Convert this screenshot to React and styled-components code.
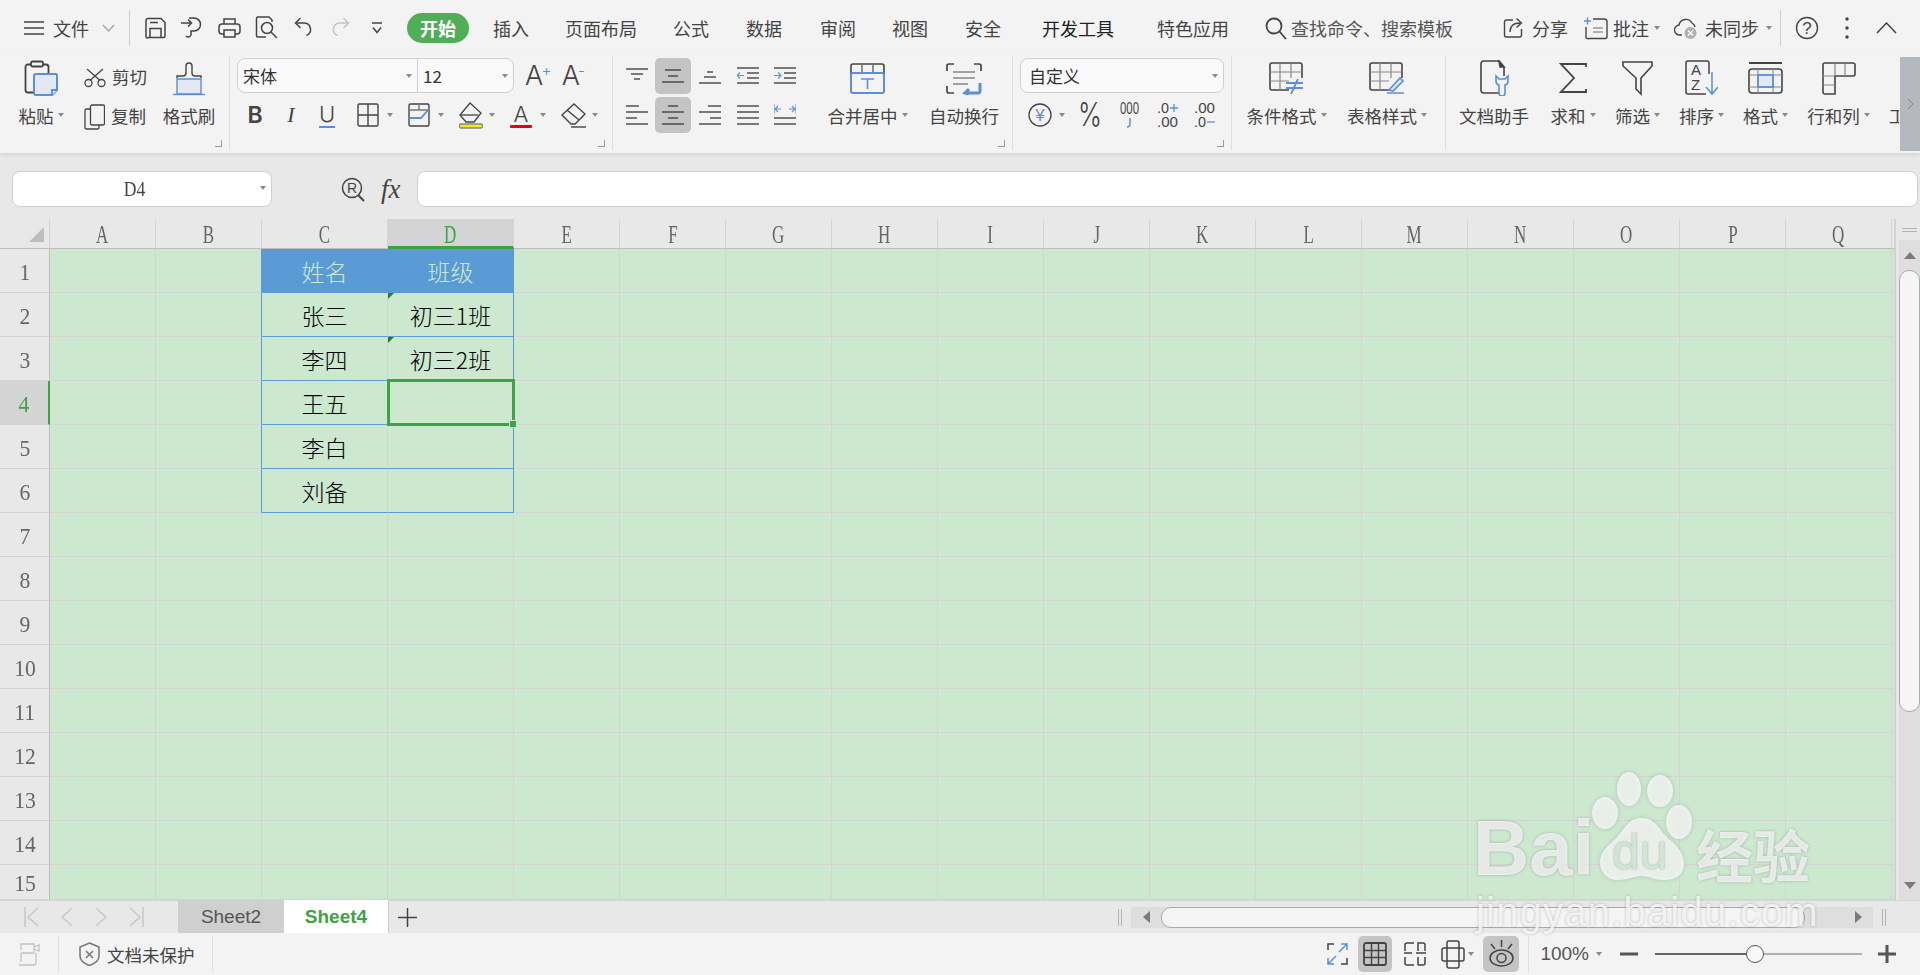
import React from 'react';
import styled, { createGlobalStyle } from 'styled-components';

const BLUE = '#5b8fd9';
const GRID = '#d3d5d3';
const CELL_BG = '#cce8cf';
const TABLE_BLUE = '#5b9bd5';
const GREEN = '#3fa243';

const GlobalStyle = createGlobalStyle`
  html, body { margin: 0; padding: 0; background: #e8e8e8; }
  body { font-family: "Noto Sans CJK SC", "Noto Sans", sans-serif; color: #444; }
  * { box-sizing: border-box; }
`;

const Shell = styled.div`
  position: relative;
  width: 1920px;
  height: 975px;
  overflow: hidden;
  display: flex;
  flex-direction: column;
`;

const Svg = styled.svg.attrs(p => ({ viewBox: `0 0 ${p.$w} ${p.$h}`, width: p.$w, height: p.$h }))`
  display: block;
  flex: none;
  fill: none;
  stroke: ${p => p.$stroke || '#444'};
  stroke-width: ${p => p.$sw || 1.5};
  margin-left: ${p => p.$ml || 0}px;
`;

/* title row */
const TitleBar = styled.div`
  height: 50px;
  flex: none;
  display: flex;
  align-items: center;
  padding: 5px 0 0 24px;
  background: #f3f3f3;
  font-size: 18px;
  white-space: nowrap;
`;
const FileLabel = styled.span`
  margin-left: 9px;
`;
const TitleDivider = styled.span`
  width: 1px;
  height: 36px;
  background: #cfcfcf;
  margin: 0 ${p => p.$right ?? 14}px 0 ${p => p.$left ?? 14}px;
  flex: none;
`;
const QuickTools = styled.div`
  display: flex;
  gap: 15px;
  align-items: center;
`;
const QuickSlot = styled.span`
  width: 22px;
  display: flex;
  justify-content: center;
`;
const HomePill = styled.span`
  width: 62px;
  height: 30px;
  border-radius: 15px;
  background: #52ad58;
  color: #fff;
  font-weight: 700;
  display: flex;
  align-items: center;
  justify-content: center;
  margin: 0 6px 0 19px;
`;
const MenuTab = styled.span`
  padding: 0 18px;
  margin-left: ${p => p.$ml || 0}px;
  color: ${p => (p.$dark ? '#222' : '#444')};
`;
const SearchText = styled.span`
  margin-left: 4px;
  color: #555;
`;
const TitleAction = styled.span`
  display: flex;
  align-items: center;
  gap: ${p => p.$gap ?? 6}px;
  margin-left: ${p => p.$ml || 0}px;
`;
const Caret = styled.i`
  display: block;
  flex: none;
  width: 0;
  height: 0;
  border-left: 3.5px solid transparent;
  border-right: 3.5px solid transparent;
  border-top: 4px solid #8a8a8a;
  margin-left: ${p => p.$ml || 0}px;
`;

/* ribbon */
const Ribbon = styled.div`
  height: 103px;
  flex: none;
  display: flex;
  padding-top: 6px;
  background: #f3f3f3;
  box-shadow: 0 2px 4px rgba(0, 0, 0, 0.08);
  position: relative;
  z-index: 2;
  font-size: 17.5px;
`;
const Group = styled.section`
  position: relative;
  flex: none;
  width: ${p => p.$w}px;
  height: 94px;
  padding: 2px 0 0 ${p => p.$pl || 0}px;
  border-right: 1px solid ${p => (p.$last ? 'transparent' : '#e0e0e0')};
  display: flex;
  gap: ${p => p.$gap || 0}px;
  overflow: hidden;
`;
const Launcher = styled.span`
  position: absolute;
  right: 7px;
  bottom: 3px;
  width: 7px;
  height: 7px;
  border-right: 1.5px solid #999;
  border-bottom: 1.5px solid #999;
`;
const LargeTool = styled.div`
  flex: none;
  width: ${p => p.$w}px;
  margin-left: ${p => p.$ml || 0}px;
  display: flex;
  flex-direction: column;
  align-items: center;
`;
const IconSlot = styled.div`
  height: 40px;
  display: flex;
  align-items: center;
  justify-content: center;
`;
const ToolLabel = styled.div`
  height: 34px;
  display: flex;
  align-items: center;
  gap: 4px;
  white-space: nowrap;
  color: #444;
`;
const SmallStack = styled.div`
  flex: none;
  margin-left: ${p => p.$ml || 0}px;
  width: ${p => p.$w}px;
`;
const SmallTool = styled.div`
  height: 39px;
  display: flex;
  align-items: center;
  gap: 6px;
  span {
    margin-top: -3px;
  }
`;
const Stack = styled.div`
  display: flex;
  flex-direction: column;
  gap: 4px;
  flex: none;
`;
const ToolRow = styled.div`
  display: flex;
  align-items: center;
  height: ${p => p.$h || 36}px;
  gap: ${p => p.$gap || 0}px;
  padding-left: ${p => p.$pl || 0}px;
`;
const Combo = styled.div`
  flex: none;
  width: ${p => p.$w}px;
  height: 35px;
  border: 1.5px solid #d0d0d0;
  border-radius: 8px;
  background: #f9f9f9;
  display: flex;
  overflow: hidden;
`;
const ComboField = styled.div`
  width: ${p => (p.$w ? `${p.$w}px` : 'auto')};
  flex: ${p => (p.$w ? 'none' : 1)};
  display: flex;
  align-items: center;
  justify-content: space-between;
  padding: 0 5px 0 ${p => p.$pl || 5}px;
  border-right: ${p => (p.$sep ? '1px solid #d0d0d0' : 'none')};
  color: #333;
  font-size: 17px;
`;
const SizeGlyph = styled.span`
  font-family: Inter, "Liberation Sans", sans-serif;
  font-weight: 300;
  font-size: 27px;
  line-height: 35px;
  color: #444;
  margin-left: ${p => p.$ml}px;
  display: flex;
  sup {
    font-size: 16px;
    line-height: 24px;
    margin-left: -2px;
    color: ${BLUE};
  }
`;
const StyleLetter = styled.span`
  width: 36px;
  text-align: center;
  font-family: ${p => (p.$italic ? '"Liberation Serif", serif' : 'Inter, "Liberation Sans", sans-serif')};
  font-size: ${p => (p.$bold ? 23 : 22)}px;
  font-weight: ${p => (p.$bold ? 600 : 300)};
  font-style: ${p => (p.$italic ? 'italic' : 'normal')};
  color: #444;
  line-height: 22px;
  span {
    display: block;
    height: 2px;
    width: 16px;
    margin: 1px auto 0;
    background: ${BLUE};
  }
`;
const FormatTools = styled.div`
  display: flex;
  gap: 15px;
  margin-left: 12px;
`;
const CaretTool = styled.div`
  display: flex;
  align-items: center;
  width: ${p => p.$w || 36}px;
`;
const FontColorGlyph = styled.div`
  width: 22px;
  text-align: center;
  font-family: Inter, "Liberation Sans", sans-serif;
  font-weight: 300;
  font-size: 22px;
  line-height: 22px;
  span {
    display: block;
    height: 3px;
    background: #e60012;
    border-radius: 1px;
  }
`;
const AlignGrid = styled.div`
  display: grid;
  grid-template-columns: 37px 36px 38px 38px 36px;
  grid-template-rows: 36px 36px;
  row-gap: 3px;
  flex: none;
`;
const AlignCell = styled.div`
  display: flex;
  align-items: center;
  justify-content: center;
  border-radius: 5px;
  background: ${p => (p.$on ? '#c4c4c4' : 'transparent')};
`;
const ScrollButton = styled.div`
  flex: none;
  width: 20px;
  height: 94px;
  margin-top: 1px;
  background: #b5b8bf;
  display: flex;
  align-items: center;
  justify-content: center;
`;

/* formula bar */
const FormulaBar = styled.div`
  height: 66px;
  flex: none;
  display: flex;
  align-items: flex-start;
  padding: 18px 2px 0 12px;
  background: #e8e8e8;
`;
const NameBox = styled.div`
  position: relative;
  width: 260px;
  height: 36px;
  flex: none;
  background: #fff;
  border: 1.5px solid #d0d0d0;
  border-radius: 8px;
  display: flex;
  align-items: center;
  justify-content: center;
  padding-right: 16px;
  font-family: "Liberation Serif", serif;
  font-size: 22px;
  color: #444;
  span {
    display: block;
    transform: scaleX(0.8);
  }
  i {
    position: absolute;
    right: 5px;
    top: 14px;
  }
`;
const FormulaIcon = styled.div`
  height: 36px;
  display: flex;
  align-items: center;
  margin-left: ${p => p.$ml}px;
`;
const FxGlyph = styled.span`
  font-family: "Liberation Serif", serif;
  font-style: italic;
  font-size: 27px;
  color: #444;
  width: 24px;
`;
const FormulaInput = styled.div`
  flex: 1;
  height: 36px;
  margin-left: 12px;
  background: #fff;
  border: 1.5px solid #d0d0d0;
  border-radius: 8px;
`;

/* sheet */
const SheetArea = styled.div`
  height: 681px;
  flex: none;
  display: flex;
  background: #e8e8e8;
`;
const SheetGrid = styled.div`
  flex: none;
  display: grid;
  grid-template-columns: 50px 106px 106px 126px 126px repeat(13, 106px) 3px;
  grid-template-rows: 30px repeat(14, 44px) 35px;
`;
const Corner = styled.div`
  background: #e8e8e8;
  border-right: 1px solid #d4d4d4;
  border-bottom: 1px solid #bdbdbd;
  display: flex;
  justify-content: flex-end;
  align-items: center;
  padding: 2px 5px 0 0;
  i {
    width: 0;
    height: 0;
    border-left: 15px solid transparent;
    border-bottom: 15px solid #bdbdbd;
  }
`;
const ColHead = styled.div`
  background: ${p => (p.$active ? '#d4d4d4' : '#e8e8e8')};
  border-right: 1px solid #d4d4d4;
  border-bottom: ${p => (p.$active ? `3px solid ${GREEN}` : '1px solid #bdbdbd')};
  color: ${p => (p.$active ? GREEN : '#666')};
  display: flex;
  align-items: center;
  justify-content: center;
  font-family: "Liberation Serif", serif;
  font-size: 25px;
  span {
    display: block;
    transform: scaleX(0.68);
    padding-top: ${p => (p.$active ? 4 : 2)}px;
  }
`;
const RowHead = styled.div`
  background: ${p => (p.$active ? '#d4d4d4' : '#e8e8e8')};
  border-right: ${p => (p.$active ? `2px solid ${GREEN}` : '1px solid #bdbdbd')};
  border-bottom: 1px solid #d4d4d4;
  color: ${p => (p.$active ? GREEN : '#666')};
  display: flex;
  align-items: center;
  justify-content: center;
  font-family: "Liberation Serif", serif;
  font-size: 24px;
  span {
    display: block;
    transform: scaleX(0.9);
    padding-top: 3px;
  }
`;
const Cell = styled.div`
  position: relative;
  background: ${p => (p.$head ? TABLE_BLUE : CELL_BG)};
  border-right: 1px solid ${p => (p.$head ? TABLE_BLUE : p.$edge ? TABLE_BLUE : GRID)};
  border-bottom: 1px solid ${p => (p.$head ? TABLE_BLUE : p.$under ? TABLE_BLUE : GRID)};
  color: ${p => (p.$head ? CELL_BG : '#000')};
  font-size: 23px;
  font-weight: 300;
  display: flex;
  align-items: center;
  justify-content: center;
  white-space: nowrap;
  &::before {
    content: '';
    display: ${p => (p.$flag ? 'block' : 'none')};
    position: absolute;
    left: 0;
    top: 0;
    border-top: 6px solid #138a1d;
    border-right: 6px solid transparent;
  }
`;
const Selection = styled.div`
  position: absolute;
  top: -2px;
  left: -1px;
  right: -2px;
  bottom: -2px;
  border: 3px solid ${GREEN};
  z-index: 1;
  i {
    position: absolute;
    right: -4px;
    bottom: -4px;
    width: 6px;
    height: 6px;
    background: ${GREEN};
    outline: 1px solid ${CELL_BG};
  }
`;
const VScroll = styled.div`
  flex: none;
  width: 25px;
  border-left: 1px solid #d0d0d0;
  padding-left: 3px;
  display: flex;
  flex-direction: column;
`;
const VSplit = styled.div`
  height: 21px;
  flex: none;
  display: flex;
  flex-direction: column;
  justify-content: center;
  gap: 2px;
  padding: 0 3px;
  i {
    display: block;
    height: 1px;
    background: #b4b4b4;
  }
`;
const VTrack = styled.div`
  flex: 1;
  background: #dedede;
  display: flex;
  flex-direction: column;
`;
const ArrowSlot = styled.div`
  height: 30px;
  flex: none;
  display: flex;
  align-items: center;
  justify-content: center;
  margin-top: ${p => (p.$end ? 'auto' : 0)};
`;
const VThumb = styled.div`
  height: 442px;
  flex: none;
  background: #f5f5f5;
  border: 1px solid #aaa;
  border-radius: 10px;
`;
const TriUp = styled.i`
  width: 0;
  height: 0;
  border-left: 6px solid transparent;
  border-right: 6px solid transparent;
  border-bottom: 7px solid #7a7a7a;
`;
const TriDown = styled(TriUp)`
  border-bottom: 0;
  border-top: 7px solid #7a7a7a;
`;
const TriLeft = styled.i`
  width: 0;
  height: 0;
  border-top: 6px solid transparent;
  border-bottom: 6px solid transparent;
  border-right: 7px solid #7a7a7a;
`;
const TriRight = styled.i`
  width: 0;
  height: 0;
  border-top: 6px solid transparent;
  border-bottom: 6px solid transparent;
  border-left: 7px solid #7a7a7a;
`;

/* tab bar */
const TabBar = styled.div`
  height: 33px;
  flex: none;
  display: flex;
  align-items: center;
  background: #e8e8e8;
  border-top: 1px solid #d6d6d6;
  padding-right: 34px;
`;
const TabNav = styled.div`
  width: 178px;
  flex: none;
  display: flex;
  align-items: center;
  gap: 22px;
  padding-left: 24px;
`;
const SheetTab = styled.div`
  width: ${p => p.$w}px;
  height: 33px;
  margin-top: -1px;
  flex: none;
  display: flex;
  align-items: center;
  justify-content: center;
  font-family: "Liberation Sans", sans-serif;
  font-size: 19px;
  font-weight: ${p => (p.$active ? 700 : 400)};
  color: ${p => (p.$active ? GREEN : '#555')};
  background: ${p => (p.$active ? '#fff' : '#cfcfcf')};
  border-right: ${p => (p.$active ? '1px solid #ccc' : 'none')};
`;
const HSplit = styled.i`
  flex: none;
  display: block;
  width: 4px;
  height: 17px;
  border-left: 1px solid #b4b4b4;
  border-right: 1px solid #b4b4b4;
  margin-left: ${p => p.$ml || 0};
`;
const HTrack = styled.div`
  width: 742px;
  height: 21px;
  flex: none;
  margin: 0 9px;
  background: #dedede;
  display: flex;
  align-items: center;
`;
const HArrow = styled.div`
  width: 30px;
  flex: none;
  display: flex;
  justify-content: center;
  margin-left: ${p => p.$ml || 0}px;
`;
const HThumb = styled.div`
  width: 644px;
  height: 21px;
  flex: none;
  background: #f5f5f5;
  border: 1px solid #aaa;
  border-radius: 10px;
`;

/* status bar */
const StatusBar = styled.div`
  flex: 1;
  display: flex;
  align-items: center;
  padding: 0 24px 0 17px;
  background: #f3f3f3;
  font-size: 17.5px;
`;
const StatusDivider = styled.span`
  flex: none;
  width: 1px;
  height: 36px;
  background: #e0e0e0;
  margin-left: ${p => p.$ml}px;
`;
const StatusText = styled.span`
  margin-left: ${p => p.$ml || 0}px;
  color: ${p => p.$color || '#444'};
`;
const StatusItem = styled.div`
  flex: none;
  display: flex;
  align-items: center;
  justify-content: center;
  margin-left: ${p => (p.$auto ? 'auto' : `${p.$ml || 0}px`)};
  width: ${p => (p.$w ? `${p.$w}px` : 'auto')};
  height: ${p => (p.$on ? '36px' : 'auto')};
  border-radius: 5px;
  background: ${p => (p.$on ? '#c4c4c4' : 'transparent')};
`;
const ZoomValue = styled.span`
  font-family: "Liberation Sans", sans-serif;
  font-size: 19px;
  color: #555;
`;
const SliderLine = styled.i`
  display: block;
  height: 1.5px;
  width: ${p => p.$w}px;
  background: ${p => p.$color};
`;
const SliderKnob = styled.i`
  display: block;
  flex: none;
  width: 18px;
  height: 18px;
  border-radius: 50%;
  border: 1.5px solid #555;
  background: #f8f8f8;
`;

/* watermark */
const Watermark = styled.div`
  position: absolute;
  left: 1476px;
  top: 772px;
  width: 345px;
  height: 170px;
  pointer-events: none;
  z-index: 3;
  color: rgba(255, 255, 255, 0.72);
  text-shadow: 0 0 3px rgba(90, 90, 90, 0.4);
`;
const PawArt = styled.svg`
  position: absolute;
  left: 0;
  top: 0;
  filter: drop-shadow(0 0 2px rgba(90, 90, 90, 0.35));
`;
const MarkBai = styled.span`
  position: absolute;
  left: -3px;
  top: 34px;
  font-family: "Liberation Sans", sans-serif;
  font-weight: 700;
  font-size: 78px;
  line-height: 84px;
`;
const MarkDu = styled.span`
  position: absolute;
  left: 136px;
  top: 50px;
  font-family: "Liberation Sans", sans-serif;
  font-size: 50px;
  line-height: 60px;
  color: #cfe6d3;
  text-shadow: 0 0 2px rgba(90, 90, 90, 0.5);
`;
const MarkCn = styled.span`
  position: absolute;
  left: 220px;
  top: 44px;
  font-weight: 700;
  font-size: 57px;
  line-height: 74px;
  white-space: nowrap;
`;
const MarkUrl = styled.span`
  position: absolute;
  left: 0;
  top: 115px;
  font-family: "Liberation Sans", sans-serif;
  font-size: 40px;
  line-height: 50px;
  letter-spacing: 1.2px;
  white-space: nowrap;
  color: rgba(255, 255, 255, 0.8);
`;

/* icons */
const Menu = () => <Svg $w={20} $h={16}><path d="M0 2h20M0 8h20M0 14h20" /></Svg>;
const Chevron = () => <Svg $w={13} $h={8} $stroke="#aaa" $ml={13}><path d="M1 1l5.5 6L12 1" /></Svg>;
const Save = () => <Svg $w={21} $h={22}><path d="M3 1.5h13l4 4V19a1.5 1.5 0 0 1-1.5 1.5h-15A1.5 1.5 0 0 1 1 19V3.500a2 2 0 0 1 2-2z" /><path d="M5 20.500v-9h11v9M5 5.500h8" /></Svg>;
const ExportPdf = () => <Svg $w={22} $h={24}><path d="M0 7h10M7 3.500 10.500 7 7 10.500" /><path d="M8 2h5a6.500 6.500 0 0 1 0 13h-3v4a3 3 0 0 1-5 1" /></Svg>;
const Print = () => <Svg $w={23} $h={22}><path d="M6 7V2h11v5" /><rect x="1" y="7" width="21" height="10" rx="3" /><rect x="6" y="13" width="11" height="7" fill="#f3f3f3" /></Svg>;
const Preview = () => <Svg $w={23} $h={23}><path d="M11 21H3a1.500 1.500 0 0 1-1.500-1.500v-17A1.500 1.500 0 0 1 3 1h11l3 3v2" /><circle cx="12" cy="12" r="5.500" /><path d="m16 16 6 6" /></Svg>;
const Undo = () => <Svg $w={19} $h={21}><path d="M6.500 1 1.500 6 6.500 11" /><path d="M2 6h8.500a6.500 6.500 0 0 1 2 12.500" /></Svg>;
const Redo = () => <Svg $w={19} $h={21} $stroke="#c4c4c4"><path d="M12.500 1 17.500 6 12.500 11" /><path d="M17 6H8.500a6.500 6.500 0 0 0-2 12.500" /></Svg>;
const More = () => <Svg $w={12} $h={13}><path d="M1 2h10M2 6.500l4 5 4-5" /></Svg>;
const Search = () => <Svg $w={22} $h={24} $ml={18} $sw={1.8}><circle cx="9" cy="10" r="7.500" /><path d="m14.500 15.500 6.500 7.500" /></Svg>;
const Share = () => <Svg $w={22} $h={23} $sw={1.4}><path d="M10 4H3.500A2 2 0 0 0 1.500 6v13a2 2 0 0 0 2 2h13a2 2 0 0 0 2-2v-6" /><path d="M7 16c0-6 4-9 10-9M13.500 2.500 18.500 7l-5 4.500" /></Svg>;
const Comment = () => <Svg $w={24} $h={24} $sw={1.4}><path d="M0 5h7M3.500 1.500v7" stroke={BLUE} /><path d="M9 3h11a3 3 0 0 1 3 3v15a1.500 1.500 0 0 1-1.500 1.500H5a2 2 0 0 1-3-2V11" /><path d="M9 12h10M9 16h10" stroke="#999" /></Svg>;
const Cloud = () => (
  <Svg $w={24} $h={24} $sw={1.4}>
    <path d="M8 19H6a5 5 0 0 1-1-10 7 7 0 0 1 13-2 6 6 0 0 1 3 4" />
    <circle cx="16.500" cy="17" r="6" fill="#b0b0b0" stroke="none" />
    <path d="m14 14.500 5 5m0-5-5 5" stroke="#fff" />
  </Svg>
);
const Help = () => (
  <Svg $w={24} $h={24} $sw={1.4}>
    <circle cx="12" cy="12" r="10.500" />
    <text x="12" y="18" textAnchor="middle" fontSize="17" fontFamily="Liberation Sans" fill="#444" stroke="none">?</text>
  </Svg>
);
const Dots = () => <Svg $w={4} $h={22} $stroke="none" $ml={26}><circle cx="2" cy="2" r="1.700" fill="#444" /><circle cx="2" cy="11" r="1.700" fill="#444" /><circle cx="2" cy="20" r="1.700" fill="#444" /></Svg>;
const Collapse = () => <Svg $w={21} $h={12} $ml={27}><path d="M1 11 10.500 1 20 11" /></Svg>;

const Paste = () => (
  <Svg $w={34} $h={36} $sw={1.8}>
    <path d="M24.500 13V7a2.500 2.500 0 0 0-2.500-2.500H4A2.500 2.500 0 0 0 1.500 7v23A2.500 2.500 0 0 0 4 32.500h6" />
    <rect x="7" y="1.500" width="12" height="5" rx="1.500" fill="#f3f3f3" />
    <path d="M12 14h20a1 1 0 0 1 1 1v15l-5 5H12a2 2 0 0 1-2-2V16a2 2 0 0 1 2-2z" fill="#e3e8f2" stroke={BLUE} strokeWidth="2" />
    <path d="M33 30h-5v5" stroke={BLUE} fill="#fff" />
  </Svg>
);
const Scissors = () => <Svg $w={22} $h={20} $sw={1.3}><circle cx="4.500" cy="15" r="3.500" /><circle cx="17.500" cy="15" r="3.500" /><path d="M6.500 12 19 1M15.500 12 3 1" /></Svg>;
const Copy = () => <Svg $w={21} $h={26} $sw={1.3}><rect x="6.500" y="1" width="14" height="20" rx="1.500" fill="#f3f3f3" /><path d="M6.500 5H2.500A1.500 1.500 0 0 0 1 6.500v17A1.500 1.500 0 0 0 2.500 25h11a1.500 1.500 0 0 0 1.500-1.500V21" /></Svg>;
const Brush = () => (
  <Svg $w={32} $h={35} $sw={1.4}>
    <path d="M4 17v-2h6a3 3 0 0 0 3-3V5a3 3 0 0 1 6 0v7a3 3 0 0 0 3 3h6v2" />
    <path d="M4 18h24v15H4z" fill="#e3e8f2" stroke={BLUE} />
    <path d="M0 33.500h32" stroke={BLUE} />
  </Svg>
);
const Borders = () => <Svg $w={22} $h={26} $sw={1.4}><rect x="1" y="2" width="20" height="22" rx="1.500" /><path d="M1 13h20M11 2v22" /></Svg>;
const CellLine = () => <Svg $w={22} $h={26} $sw={1.4}><rect x="1" y="2" width="20" height="22" rx="1.500" /><path d="M1 8h20M11 2v6" stroke="#777" /><path d="M1 16h12l8-9" stroke={BLUE} strokeWidth="1.800" /></Svg>;
const FillColor = () => (
  <Svg $w={24} $h={27} $sw={1.3}>
    <path d="M11 1 22 11l-7 9H7l-6-7z" />
    <path d="M1 13h18" />
    <rect x="0.500" y="22" width="23" height="4" rx="1.500" fill="#f6ea16" stroke="#888" />
  </Svg>
);
const Eraser = () => <Svg $w={25} $h={25} $sw={1.4}><path d="M13 1 24 11 14 21h-4L1 12z" /><path d="M6 7 18 17" /><path d="M10 24h15" /></Svg>;
const AlignLines = ({ lines, children }) => (
  <Svg $w={22} $h={22} $sw={1.4}>
    {lines.map(([a, b, y]) => <line key={`${a}-${y}`} x1={a} x2={b} y1={y} y2={y} />)}
    {children}
  </Svg>
);
const alignIcons = [
  { lines: [[0, 22, 4], [5, 17, 9], [8, 14, 14]] },
  { lines: [[3, 19, 5], [6, 16, 11], [0, 22, 17]], on: true },
  { lines: [[8, 14, 7], [5, 17, 12], [0, 22, 18]] },
  { lines: [[0, 22, 3], [10, 22, 8], [10, 22, 13], [0, 22, 18]], arrow: 'M7 10.500H0m3-3-3 3 3 3' },
  { lines: [[0, 22, 3], [10, 22, 8], [10, 22, 13], [0, 22, 18]], arrow: 'M0 10.500h7m-3-3 3 3-3 3' },
  { lines: [[0, 13, 2], [0, 22, 8], [0, 11, 14], [0, 22, 20]] },
  { lines: [[6, 16, 2], [0, 22, 8], [6, 16, 14], [0, 22, 20]], on: true },
  { lines: [[9, 22, 2], [0, 22, 8], [11, 22, 14], [0, 22, 20]] },
  { lines: [[0, 22, 2], [0, 22, 8], [0, 22, 14], [0, 22, 20]] },
  { lines: [[0, 22, 14], [0, 22, 20]], arrow: 'M7 5H1m3-3-3 3 3 3M15 5h6m-3-3 3 3-3 3M0 0v10M22 0v10' },
];
const Merge = () => (
  <Svg $w={35} $h={31} $sw={1.6}>
    <path d="M1 11V3a2 2 0 0 1 2-2h29a2 2 0 0 1 2 2v8" />
    <path d="M12 1v10M23 1v10" stroke="#777" />
    <rect x="1" y="10" width="33" height="20" rx="2" fill="#f3f3f3" stroke={BLUE} strokeWidth="2" />
    <path d="M11 16h13M17.500 16v10" stroke={BLUE} />
  </Svg>
);
const Wrap = () => (
  <Svg $w={36} $h={33} $sw={1.7}>
    <path d="M1 9V4a2 2 0 0 1 2-2h5M28 2h5a2 2 0 0 1 2 2v5M1 24v5a2 2 0 0 0 2 2h5" />
    <path d="M7 10h22M7 16h22M7 22h15" stroke="#888" />
    <path d="M34 21v8a2 2 0 0 1-2 2H19m4-4-4 4 4 1" stroke={BLUE} strokeWidth="3" />
  </Svg>
);
const Yen = () => (
  <Svg $w={24} $h={24} $sw={1.3}>
    <circle cx="12" cy="12" r="11" />
    <text x="12" y="18" textAnchor="middle" fontSize="17" fontFamily="Liberation Sans" fill={BLUE} stroke="none">¥</text>
  </Svg>
);
const NumText = ({ w, top, bottom, mark }) => (
  <Svg $w={w} $h={30} $stroke="none">
    <text x="0" y="13" fontSize="15" fontFamily="Liberation Sans" fill="#444" textLength={w - (mark === 'top' ? 9 : 0)} lengthAdjust="spacingAndGlyphs">{top}</text>
    <text x="0" y="27" fontSize="15" fontFamily="Liberation Sans" fill="#444" textLength={w - (mark === 'bottom' ? 9 : 0)} lengthAdjust="spacingAndGlyphs">{bottom}</text>
    {mark === 'top' && <path d="M13 8h8M17 4v8" stroke={BLUE} strokeWidth="1.300" />}
    {mark === 'bottom' && <path d="M13 22h8" stroke={BLUE} strokeWidth="1.300" />}
  </Svg>
);
const Percent = () => (
  <Svg $w={24} $h={30} $stroke="none">
    <text x="0" y="26" fontSize="33" fontFamily="Inter" fontWeight="300" fill="#444" textLength="24" lengthAdjust="spacingAndGlyphs">%</text>
  </Svg>
);
const Thousands = () => (
  <Svg $w={23} $h={30} $stroke="none">
    <text x="2" y="14" fontSize="16" fontFamily="Liberation Sans" fill="#444" textLength="19" lengthAdjust="spacingAndGlyphs">000</text>
    <path d="M12 18v6a3 3 0 0 1-3 3" stroke={BLUE} strokeWidth="1.500" fill="none" />
  </Svg>
);
const TableBase = ({ children }) => (
  <Svg $w={36} $h={33} $sw={1.6}>
    <path d="M20 28H3a2 2 0 0 1-2-2V3a2 2 0 0 1 2-2h28a2 2 0 0 1 2 2v13" />
    <path d="M1 10h32M1 19h19M11 1v27M22 1v15" stroke="#888" strokeWidth="1.200" />
    {children}
  </Svg>
);
const CondFormat = () => <TableBase><path d="M17 21h17M17 26h17M29 17l-7 15" stroke={BLUE} strokeWidth="1.800" /></TableBase>;
const TableStyle = () => <TableBase><path d="M18 31h17M20 28l11-12 3 3-10 10z" stroke={BLUE} strokeWidth="1.600" fill="#e3e8f2" /></TableBase>;
const DocHelper = () => (
  <Svg $w={31} $h={36} $sw={1.6}>
    <path d="M21 33H5a3 3 0 0 1-3-3V4a3 3 0 0 1 3-3h15l5 6v9" />
    <path d="M20 1l1 6h4z" fill="#444" />
    <path d="M17 16v5a4 4 0 0 0 3 4v8a3 3 0 0 0 6 0v-8a4 4 0 0 0 3-4v-5l-3 3h-6z" stroke={BLUE} fill="#f3f3f3" />
  </Svg>
);
const Sum = () => <Svg $w={28} $h={32} $sw={1.8}><path d="M27 5V2H2l13 14L2 30h25v-3" /></Svg>;
const Funnel = () => <Svg $w={33} $h={36} $sw={1.6}><path d="M2 2h29v4L20 18v16l-5-5V18L2 6z" /></Svg>;
const Sort = () => (
  <Svg $w={33} $h={36} $sw={1.5}>
    <path d="M24 14V3a2 2 0 0 0-2-2H3a2 2 0 0 0-2 2v29a2 2 0 0 0 2 2h18" />
    <text x="6" y="15" fontSize="15" fontFamily="Liberation Sans" fill="#444" stroke="none">A</text>
    <text x="6" y="30" fontSize="15" fontFamily="Liberation Sans" fill="#444" stroke="none">Z</text>
    <path d="M27 12v22M21 27l6 7 6-7" stroke={BLUE} />
  </Svg>
);
const FormatIcon = () => (
  <Svg $w={35} $h={32} $sw={1.6}>
    <path d="M1 1h33" strokeWidth="2" />
    <rect x="1" y="7" width="33" height="24" rx="3" />
    <path d="M1 13h33M1 25h33M10 7v24M25 7v24" stroke="#888" strokeWidth="1.100" />
    <rect x="10" y="13" width="15" height="12" fill="#e3e8f2" stroke={BLUE} strokeWidth="1.800" />
  </Svg>
);
const RowCol = () => (
  <Svg $w={34} $h={33} $sw={1.6}>
    <path d="M13 32H3a2 2 0 0 1-2-2V3a2 2 0 0 1 2-2h28a2 2 0 0 1 2 2v9a2 2 0 0 1-2 2H13z" />
    <path d="M1 14h12M1 23h12M13 1v13M23 1v13" stroke="#888" strokeWidth="1.200" />
  </Svg>
);
const NextMini = () => <Svg $w={7} $h={12} $stroke="#7f848c" $sw={1}><path d="M1 1l5 5-5 5" /></Svg>;
const RSearch = () => (
  <Svg $w={25} $h={25} $sw={1.5}>
    <circle cx="11" cy="11" r="9.500" />
    <text x="11" y="16" textAnchor="middle" fontSize="14" fontFamily="Liberation Sans" fill="#444" stroke="none">R</text>
    <path d="m17 18 6 6" strokeWidth="2" />
  </Svg>
);
const NavFirst = () => <Svg $w={15} $h={20} $stroke="#c8c8c8"><path d="M1 0v20M14 1 4 10l10 9" /></Svg>;
const NavPrev = () => <Svg $w={12} $h={20} $stroke="#c8c8c8"><path d="M11 1 1 10l10 9" /></Svg>;
const NavNext = () => <Svg $w={12} $h={20} $stroke="#c8c8c8"><path d="M1 1l10 9-10 9" /></Svg>;
const NavLast = () => <Svg $w={15} $h={20} $stroke="#c8c8c8"><path d="M14 0v20M1 1l10 9-10 9" /></Svg>;
const AddSheet = () => <Svg $w={19} $h={19} $ml={9}><path d="M0 9.500h19M9.500 0v19" /></Svg>;
const Macro = () => (
  <Svg $w={23} $h={24} $stroke="#c2c2c2" $sw={1.3}>
    <path d="M4 8V2h13v9H4M17 5l5-2v6l-5-2" />
    <path d="M19 11v10a2 2 0 0 1-2 2H2M4 11v9" />
  </Svg>
);
const Shield = () => <Svg $w={21} $h={24} $ml={20} $stroke="#777"><path d="M10.500 1 20 5v9c0 5-4 7.500-9.500 9.500C5 21.500 1 19 1 14V5z" /><path d="m7 9 7 7m0-7-7 7" /></Svg>;
const FullScreen = () => (
  <Svg $w={21} $h={22}>
    <path d="M1 7V1h6M14 21h6v-6" stroke="#444" />
    <path d="M12 9l8-8m-6 0h6v6M9 13l-8 8m0-6v6h6" stroke={BLUE} />
  </Svg>
);
const GridView = () => <Svg $w={24} $h={24} $sw={1.8}><rect x="1" y="1" width="22" height="22" rx="2" /><path d="M1 8.500h22M1 15.500h22M8.500 1v22M15.500 1v22" strokeWidth="1.400" /></Svg>;
const PageBreak = () => <Svg $w={24} $h={24}><path d="M22 9V3a2 2 0 0 0-2-2h-5v8M11 1H4a2 2 0 0 0-2 2v6M1 11h8m4 0h10M2 15v6a2 2 0 0 0 2 2h7M15 23h5a2 2 0 0 0 2-2v-6M15 15v8" /></Svg>;
const PageLayout = () => <Svg $w={24} $h={29}><rect x="6" y="1" width="12" height="27" rx="2" /><rect x="1" y="8" width="22" height="13" rx="2" /></Svg>;
const Eye = () => (
  <Svg $w={25} $h={28}>
    <path d="M12.500 0v7M2 4l4 5M23 4l-4 5" />
    <ellipse cx="12.500" cy="18" rx="11.500" ry="8" />
    <circle cx="12.500" cy="18" r="4.500" />
  </Svg>
);
const ZoomMinus = () => <Svg $w={18} $h={4} $stroke="#555" $sw={3}><path d="M0 2h18" /></Svg>;
const ZoomPlus = () => <Svg $w={18} $h={18} $stroke="#555" $sw={3}><path d="M0 9h18M9 0v18" /></Svg>;
const Dialog = () => <Launcher />;

const menuTabs = [
  { name: '插入' },
  { name: '页面布局' },
  { name: '公式' },
  { name: '数据', ml: 1 },
  { name: '审阅', ml: 2 },
  { name: '视图' },
  { name: '安全', ml: 1 },
  { name: '开发工具', ml: 5, dark: true },
  { name: '特色应用', ml: 7 },
];
const columns = 'ABCDEFGHIJKLMNOPQ'.split('');
const rowCount = 15;
const tableData = {
  1: { C: '姓名', D: '班级' },
  2: { C: '张三', D: '初三1班' },
  3: { C: '李四', D: '初三2班' },
  4: { C: '王五' },
  5: { C: '李白' },
  6: { C: '刘备' },
};

function Title() {
  return (
    <TitleBar>
      <Menu />
      <FileLabel>文件</FileLabel>
      <Chevron />
      <TitleDivider />
      <QuickTools>
        <QuickSlot><Save /></QuickSlot>
        <QuickSlot><ExportPdf /></QuickSlot>
        <QuickSlot><Print /></QuickSlot>
        <QuickSlot><Preview /></QuickSlot>
        <QuickSlot><Undo /></QuickSlot>
        <QuickSlot><Redo /></QuickSlot>
        <QuickSlot><More /></QuickSlot>
      </QuickTools>
      <HomePill>开始</HomePill>
      {menuTabs.map(t => <MenuTab key={t.name} $ml={t.ml} $dark={t.dark}>{t.name}</MenuTab>)}
      <Search />
      <SearchText>查找命令、搜索模板</SearchText>
      <TitleAction $ml={50} $gap={7}><Share />分享</TitleAction>
      <TitleAction $ml={16} $gap={5}><Comment />批注<Caret /></TitleAction>
      <TitleAction $ml={14} $gap={7}><Cloud />未同步<Caret /></TitleAction>
      <TitleDivider $left={8} $right={14} />
      <Help />
      <Dots />
      <Collapse />
    </TitleBar>
  );
}

function RibbonBar() {
  return (
    <Ribbon>
      <Group $w={230} $pl={18}>
        <LargeTool $w={46}>
          <IconSlot><Paste /></IconSlot>
          <ToolLabel>粘贴<Caret /></ToolLabel>
        </LargeTool>
        <SmallStack $ml={20} $w={64}>
          <SmallTool><Scissors /><span>剪切</span></SmallTool>
          <SmallTool><Copy /><span>复制</span></SmallTool>
        </SmallStack>
        <LargeTool $w={54} $ml={14}>
          <IconSlot><Brush /></IconSlot>
          <ToolLabel>格式刷</ToolLabel>
        </LargeTool>
        <Dialog />
      </Group>
      <Group $w={383} $pl={7}>
        <Stack>
          <ToolRow $h={35}>
            <Combo $w={277}>
              <ComboField $w={180} $sep>宋体<Caret /></ComboField>
              <ComboField>12<Caret /></ComboField>
            </Combo>
            <SizeGlyph $ml={11}>A<sup>+</sup></SizeGlyph>
            <SizeGlyph $ml={10}>A<sup>-</sup></SizeGlyph>
          </ToolRow>
          <ToolRow>
            <StyleLetter $bold>B</StyleLetter>
            <StyleLetter $italic>I</StyleLetter>
            <StyleLetter>U<span /></StyleLetter>
            <FormatTools>
              <CaretTool><Borders /><Caret $ml={8} /></CaretTool>
              <CaretTool><CellLine /><Caret $ml={8} /></CaretTool>
              <CaretTool><FillColor /><Caret $ml={6} /></CaretTool>
              <CaretTool><FontColorGlyph>A<span /></FontColorGlyph><Caret $ml={8} /></CaretTool>
              <CaretTool><Eraser /><Caret $ml={6} /></CaretTool>
            </FormatTools>
          </ToolRow>
        </Stack>
        <Dialog />
      </Group>
      <Group $w={400} $pl={5}>
        <AlignGrid>
          {alignIcons.map((a, i) => (
            <AlignCell key={i} $on={a.on}>
              <AlignLines lines={a.lines}>{a.arrow && <path d={a.arrow} stroke={BLUE} strokeWidth="1.100" />}</AlignLines>
            </AlignCell>
          ))}
        </AlignGrid>
        <LargeTool $w={83} $ml={23}>
          <IconSlot><Merge /></IconSlot>
          <ToolLabel>合并居中<Caret /></ToolLabel>
        </LargeTool>
        <LargeTool $w={72} $ml={19}>
          <IconSlot><Wrap /></IconSlot>
          <ToolLabel>自动换行</ToolLabel>
        </LargeTool>
        <Dialog />
      </Group>
      <Group $w={219} $pl={7}>
        <Stack>
          <ToolRow $h={35}>
            <Combo $w={204}>
              <ComboField $pl={8}>自定义<Caret /></ComboField>
            </Combo>
          </ToolRow>
          <ToolRow $pl={8} $gap={16}>
            <CaretTool $w={34}><Yen /><Caret $ml={7} /></CaretTool>
            <Percent />
            <Thousands />
            <NumText w={21} top=".0" bottom=".00" mark="top" />
            <NumText w={21} top=".00" bottom=".0" mark="bottom" />
          </ToolRow>
        </Stack>
        <Dialog />
      </Group>
      <Group $w={214} $pl={13}>
        <LargeTool $w={83}>
          <IconSlot><CondFormat /></IconSlot>
          <ToolLabel>条件格式<Caret /></ToolLabel>
        </LargeTool>
        <LargeTool $w={84} $ml={17}>
          <IconSlot><TableStyle /></IconSlot>
          <ToolLabel>表格样式<Caret /></ToolLabel>
        </LargeTool>
      </Group>
      <Group $w={454} $pl={12} $last>
        <LargeTool $w={72}>
          <IconSlot><DocHelper /></IconSlot>
          <ToolLabel>文档助手</ToolLabel>
        </LargeTool>
        <LargeTool $w={46} $ml={20}>
          <IconSlot><Sum /></IconSlot>
          <ToolLabel>求和<Caret /></ToolLabel>
        </LargeTool>
        <LargeTool $w={47} $ml={18}>
          <IconSlot><Funnel /></IconSlot>
          <ToolLabel>筛选<Caret /></ToolLabel>
        </LargeTool>
        <LargeTool $w={47} $ml={17}>
          <IconSlot><Sort /></IconSlot>
          <ToolLabel>排序<Caret /></ToolLabel>
        </LargeTool>
        <LargeTool $w={47} $ml={17}>
          <IconSlot><FormatIcon /></IconSlot>
          <ToolLabel>格式<Caret /></ToolLabel>
        </LargeTool>
        <LargeTool $w={65} $ml={17}>
          <IconSlot><RowCol /></IconSlot>
          <ToolLabel>行和列<Caret /></ToolLabel>
        </LargeTool>
        <LargeTool $w={54} $ml={17}>
          <IconSlot />
          <ToolLabel>工作表</ToolLabel>
        </LargeTool>
      </Group>
      <ScrollButton><NextMini /></ScrollButton>
    </Ribbon>
  );
}

function Formula() {
  return (
    <FormulaBar>
      <NameBox><span>D4</span><Caret /></NameBox>
      <FormulaIcon $ml={69}><RSearch /></FormulaIcon>
      <FormulaIcon $ml={15}><FxGlyph>fx</FxGlyph></FormulaIcon>
      <FormulaInput />
    </FormulaBar>
  );
}

function Sheet() {
  const rows = Array.from({ length: rowCount }, (_, i) => i + 1);
  return (
    <SheetArea>
      <SheetGrid>
        <Corner><i /></Corner>
        {columns.map(c => <ColHead key={c} $active={c === 'D'}><span>{c}</span></ColHead>)}
        <ColHead />
        {rows.map(r => (
          <React.Fragment key={r}>
            <RowHead $active={r === 4}><span>{r}</span></RowHead>
            {columns.map(c => {
              const inTable = r <= 6;
              const head = r === 1 && (c === 'C' || c === 'D');
              return (
                <Cell
                  key={c}
                  $head={head}
                  $edge={inTable && (c === 'B' || c === 'D')}
                  $under={inTable && (c === 'C' || c === 'D')}
                  $flag={c === 'D' && (r === 2 || r === 3)}
                >
                  {tableData[r] && tableData[r][c]}
                  {c === 'D' && r === 4 && <Selection><i /></Selection>}
                </Cell>
              );
            })}
            <Cell />
          </React.Fragment>
        ))}
      </SheetGrid>
      <VScroll>
        <VSplit><i /><i /></VSplit>
        <VTrack>
          <ArrowSlot><TriUp /></ArrowSlot>
          <VThumb />
          <ArrowSlot $end><TriDown /></ArrowSlot>
        </VTrack>
      </VScroll>
    </SheetArea>
  );
}

function Tabs() {
  return (
    <TabBar>
      <TabNav><NavFirst /><NavPrev /><NavNext /><NavLast /></TabNav>
      <SheetTab $w={106}>Sheet2</SheetTab>
      <SheetTab $w={105} $active>Sheet4</SheetTab>
      <AddSheet />
      <HSplit $ml="auto" />
      <HTrack>
        <HArrow><TriLeft /></HArrow>
        <HThumb />
        <HArrow $ml={38}><TriRight /></HArrow>
      </HTrack>
      <HSplit />
    </TabBar>
  );
}

function Status() {
  return (
    <StatusBar>
      <Macro />
      <StatusDivider $ml={18} />
      <Shield />
      <StatusText $ml={7}>文档未保护</StatusText>
      <StatusDivider $ml={17} />
      <StatusItem $auto><FullScreen /></StatusItem>
      <StatusItem $ml={10} $w={34} $on><GridView /></StatusItem>
      <StatusItem $ml={11}><PageBreak /></StatusItem>
      <StatusItem $ml={14}><PageLayout /><Caret $ml={3} /></StatusItem>
      <StatusItem $ml={9} $w={36} $on><Eye /></StatusItem>
      <StatusDivider $ml={9} />
      <StatusItem $ml={11}><ZoomValue>100%</ZoomValue><Caret $ml={7} /></StatusItem>
      <StatusItem $ml={18}><ZoomMinus /></StatusItem>
      <StatusItem $ml={17}>
        <SliderLine $w={91} $color="#666" />
        <SliderKnob />
        <SliderLine $w={98} $color="#b0b0b0" />
      </StatusItem>
      <StatusItem $ml={16}><ZoomPlus /></StatusItem>
    </StatusBar>
  );
}

function BaiduMark() {
  return (
    <Watermark>
      <MarkBai>Bai</MarkBai>
      <PawArt width="220" height="115" viewBox="0 0 220 115" fill="rgba(255,255,255,0.72)">
        <ellipse cx="129" cy="41" rx="13" ry="16" />
        <ellipse cx="153" cy="17" rx="12" ry="17" />
        <ellipse cx="184" cy="19" rx="13" ry="16" />
        <ellipse cx="203" cy="50" rx="13" ry="17" />
        <path d="M166 46C180 46 184 60 194 68C204 76 208 84 208 92C208 104 198 108 188 108C178 108 174 104 166 104C158 104 152 108 142 108C130 108 124 100 124 90C124 80 132 74 140 66C150 56 152 46 166 46Z" />
      </PawArt>
      <MarkDu>du</MarkDu>
      <MarkCn>经验</MarkCn>
      <MarkUrl>jingyan.baidu.com</MarkUrl>
    </Watermark>
  );
}

export default function App() {
  return (
    <Shell>
      <GlobalStyle />
      <Title />
      <RibbonBar />
      <Formula />
      <Sheet />
      <Tabs />
      <Status />
      <BaiduMark />
    </Shell>
  );
}
